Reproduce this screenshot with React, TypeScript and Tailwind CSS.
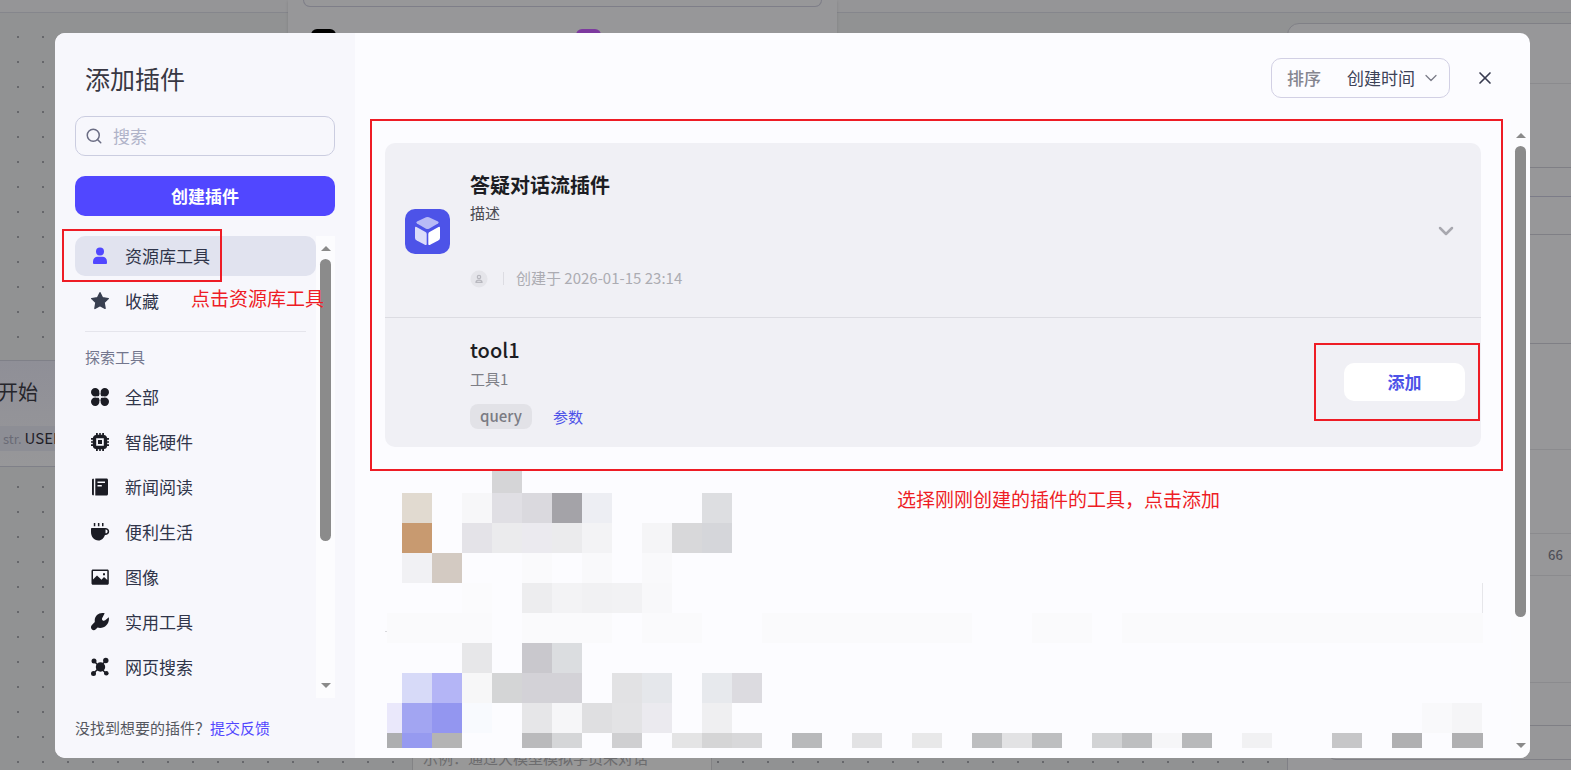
import { ReactNode } from "react";
import { Search, ChevronDown, X } from "lucide-react";

interface Category {
  label: string;
  icon: ReactNode;
}

interface Cell {
  x: number;
  y: number;
  fill: string;
  w?: number;
  h?: number;
}

const iconClass = "h-5 w-5 shrink-0";

const UserIcon = () => (
  <svg viewBox="0 0 20 20" className={iconClass} fill="#5147ff">
    <circle cx="10" cy="5.5" r="4" />
    <path d="M3 15.5C3 12.5 5.2 10.8 7.5 10.8h5c2.3 0 4.5 1.7 4.5 4.7v1.3c0 .8-.5 1.2-1.2 1.2H4.2C3.5 18 3 17.6 3 16.8z" />
  </svg>
);

const StarIcon = () => (
  <svg viewBox="0 0 20 20" className={iconClass} fill="#383f50" stroke="#383f50" strokeWidth="1.4" strokeLinejoin="round">
    <path d="M10 1.7l2.5 5.1 5.8.8-4.2 4 1 5.8-5.1-2.7-5.1 2.7 1-5.8-4.2-4 5.8-.8z" />
  </svg>
);

const categories: Category[] = [
  {
    label: "全部",
    icon: (
      <svg viewBox="0 0 20 20" className={iconClass} fill="#1b1c24">
        <path d="M5.2 1a4.2 4.2 0 1 1 0 8.4A4.2 4.2 0 0 1 5.2 1zM14.8 1a4.2 4.2 0 1 1 0 8.4 4.2 4.2 0 0 1 0-8.4zM5.2 10.6a4.2 4.2 0 1 1 0 8.4 4.2 4.2 0 0 1 0-8.4zM14.8 10.6a4.2 4.2 0 1 1 0 8.4 4.2 4.2 0 0 1 0-8.4z" />
        <path d="M6 6h3.4v1.5A2 2 0 0 1 7.5 9.4zM14 6h-3.4v1.5a2 2 0 0 0 1.9 1.9zM6 14h3.4v-1.5a2 2 0 0 0-1.9-1.9zM14 14h-3.4v-1.5a2 2 0 0 1 1.9-1.9z" />
      </svg>
    ),
  },
  {
    label: "智能硬件",
    icon: (
      <svg viewBox="0 0 20 20" className={iconClass} fill="#1b1c24">
        <path
          fillRule="evenodd"
          d="M6 1h1.8v1.8h1.4V1h1.6v1.8h1.4V1H14v1.9c1.7.1 3 1.4 3.1 3.1H19v1.8h-1.8v1.4H19v1.6h-1.8v1.4H19V14h-1.9c-.1 1.7-1.4 3-3.1 3.1V19h-1.8v-1.8h-1.4V19H9.2v-1.8H7.8V19H6v-1.9C4.3 17 3 15.7 2.9 14H1v-1.8h1.8v-1.4H1V9.2h1.8V7.8H1V6h1.9C3 4.3 4.3 3 6 2.900zM6.200 6.200v7.600h7.600V6.200z"
        />
        <path d="M8 8h4v4H8z" />
      </svg>
    ),
  },
  {
    label: "新闻阅读",
    icon: (
      <svg viewBox="0 0 20 20" className={iconClass} fill="#1b1c24">
        <path d="M2 3c0-.8.5-1.3 1.2-1.3h.7v16.6h-.7C2.5 18.3 2 17.8 2 17z" />
        <path fillRule="evenodd" d="M5.3 1.5h11.2c.9 0 1.5.6 1.5 1.5v14c0 .9-.6 1.5-1.5 1.5H5.3zM7.5 4.5V6H15V4.5zM7.5 8v1.5h4.3V8z" />
      </svg>
    ),
  },
  {
    label: "便利生活",
    icon: (
      <svg viewBox="0 0 20 20" className={iconClass} fill="#1b1c24">
        <path d="M3.8 1h1.5v3.2H3.8zM7.9 1h1.5v3.2H7.9zM12 1h1.5v3.2H12z" />
        <path
          fillRule="evenodd"
          d="M2 6h13.5c2 0 3.7 1.5 3.7 3.5s-1.7 3.5-3.9 3.5h-.3c-1.2 3-3.3 5.5-6.5 5.5C4 18.5 1 14.5 1 10V7c0-.6.4-1 1-1zM15.5 7.5v3.8h.2c1 0 1.9-.8 1.9-1.9s-.8-1.900-1.800-1.900z"
        />
      </svg>
    ),
  },
  {
    label: "图像",
    icon: (
      <svg viewBox="0 0 20 20" className={iconClass} fill="#1b1c24">
        <path
          fillRule="evenodd"
          d="M3 2.5h14.3c.9 0 1.5.6 1.5 1.5v12.3c0 .9-.6 1.5-1.5 1.5H3c-.9 0-1.5-.6-1.5-1.5V4c0-.9.6-1.5 1.5-1.5zM3 4v8.400l4-4 4.500 4.300L14 10l3.300 3V4zM13 6.200h2v2h-2z"
        />
      </svg>
    ),
  },
  {
    label: "实用工具",
    icon: (
      <svg viewBox="0 0 20 20" className={iconClass} fill="#1b1c24">
        <path d="M14.7 1.3C9.500-.3 4 3.500 4.800 9.900L1.700 13.300c-1 1-1 2.800 0 3.900 1.300 1.400 3 1.200 4.100.1l1.800-1.700c6.800 1.600 12.300-3.700 11.200-10.300l-3.600 3c-.9.7-2.100.6-2.700-.1-.7-.8-.7-1.800 0-2.600z" />
      </svg>
    ),
  },
  {
    label: "网页搜索",
    icon: (
      <svg viewBox="0 0 20 20" className={iconClass} fill="#1b1c24" stroke="#1b1c24">
        <path d="M4 4l12 12.5M16 3.5L3.5 16.5" strokeWidth="1.4" />
        <g stroke="none">
          <circle cx="10.5" cy="10" r="4.7" />
          <circle cx="4" cy="4" r="2.5" />
          <circle cx="15.8" cy="3.5" r="2.7" />
          <circle cx="3.5" cy="16.5" r="2.5" />
          <circle cx="16.3" cy="16.3" r="2.3" />
        </g>
      </svg>
    ),
  },
];

// Censored list entries, in 30px blocks measured from the list's left edge
const cells: Cell[] = [
  { x: 107, y: 0, h: 22, fill: "#d5d5d7" },
  { x: 17, y: 22, fill: "#e1dad0" },
  { x: 77, y: 22, fill: "#f7f7f9" },
  { x: 107, y: 22, fill: "#e0dfe4" },
  { x: 137, y: 22, fill: "#dad9de" },
  { x: 167, y: 22, fill: "#a4a3a8" },
  { x: 197, y: 22, fill: "#edeef3" },
  { x: 317, y: 22, fill: "#dddee1" },
  { x: 17, y: 52, fill: "#c89a70" },
  { x: 77, y: 52, fill: "#e4e3e8" },
  { x: 107, y: 52, fill: "#ebebed" },
  { x: 137, y: 52, fill: "#ebeaef" },
  { x: 167, y: 52, fill: "#ebebed" },
  { x: 197, y: 52, fill: "#f3f3f5" },
  { x: 257, y: 52, fill: "#f5f5f7" },
  { x: 287, y: 52, fill: "#d8d8da" },
  { x: 317, y: 52, fill: "#d5d6da" },
  { x: 17, y: 82, fill: "#f1f1f4" },
  { x: 47, y: 82, fill: "#d3cac2" },
  { x: 137, y: 82, fill: "#fafafc" },
  { x: 197, y: 82, fill: "#f9f9fb" },
  { x: 257, y: 82, fill: "#f9f9fb" },
  { x: 77, y: 112, fill: "#fbfbfd" },
  { x: 137, y: 112, fill: "#ededef" },
  { x: 167, y: 112, fill: "#f3f3f5" },
  { x: 197, y: 112, fill: "#f1f1f3" },
  { x: 227, y: 112, fill: "#f2f2f4" },
  { x: 257, y: 112, fill: "#f8f8fa" },
  { x: 1097, y: 112, w: 1, fill: "#e6e6ea" },
  { x: 0, y: 160, w: 2, h: 1, fill: "#d8d8dc" },
  { x: 2, y: 142, w: 105, fill: "#fafafc" },
  { x: 137, y: 142, w: 90, fill: "#fafafc" },
  { x: 257, y: 142, w: 60, fill: "#fafafc" },
  { x: 377, y: 142, w: 210, fill: "#fafafc" },
  { x: 647, y: 142, w: 60, fill: "#fafafc" },
  { x: 737, y: 142, w: 361, fill: "#fafafc" },
  { x: 77, y: 172, fill: "#e7e7e9" },
  { x: 137, y: 172, fill: "#c9c8cd" },
  { x: 167, y: 172, fill: "#dbdde0" },
  { x: 17, y: 202, fill: "#d7daf8" },
  { x: 47, y: 202, fill: "#b4b5f6" },
  { x: 77, y: 202, fill: "#f7f7f8" },
  { x: 107, y: 202, fill: "#d4d5d6" },
  { x: 137, y: 202, w: 60, fill: "#d3d2d7" },
  { x: 227, y: 202, fill: "#e2e2e4" },
  { x: 257, y: 202, fill: "#e5e7eb" },
  { x: 317, y: 202, fill: "#e7e9ed" },
  { x: 347, y: 202, fill: "#dcdbe0" },
  { x: 2, y: 232, w: 15, fill: "#eae8fb" },
  { x: 17, y: 232, fill: "#a2a5f2" },
  { x: 47, y: 232, fill: "#9396f0" },
  { x: 77, y: 232, fill: "#f8fafe" },
  { x: 137, y: 232, fill: "#e6e6e8" },
  { x: 167, y: 232, fill: "#f6f6f8" },
  { x: 197, y: 232, fill: "#dfdfe1" },
  { x: 227, y: 232, fill: "#e3e3e5" },
  { x: 257, y: 232, fill: "#ebeaef" },
  { x: 317, y: 232, fill: "#efeff1" },
  { x: 1037, y: 232, fill: "#f9f9fb" },
  { x: 1067, y: 232, fill: "#f5f5f7" },
  { x: 2, y: 262, w: 15, h: 15, fill: "#adaeb0" },
  { x: 17, y: 262, h: 15, fill: "#969af0" },
  { x: 47, y: 262, h: 15, fill: "#b4b4b4" },
  { x: 137, y: 262, h: 15, fill: "#bababc" },
  { x: 167, y: 262, h: 15, fill: "#d5d6d8" },
  { x: 227, y: 262, h: 15, fill: "#cfcfd1" },
  { x: 287, y: 262, h: 15, fill: "#e4e4e5" },
  { x: 317, y: 262, h: 15, fill: "#d5d5d6" },
  { x: 347, y: 262, h: 15, fill: "#d8d8da" },
  { x: 407, y: 262, h: 15, fill: "#b8b9bb" },
  { x: 467, y: 262, h: 15, fill: "#e2e2e4" },
  { x: 527, y: 262, h: 15, fill: "#e8e8e9" },
  { x: 587, y: 262, h: 15, fill: "#bdbec0" },
  { x: 617, y: 262, h: 15, fill: "#e2e2e4" },
  { x: 647, y: 262, h: 15, fill: "#bdbec0" },
  { x: 707, y: 262, h: 15, fill: "#d2d3d5" },
  { x: 737, y: 262, h: 15, fill: "#bdbec0" },
  { x: 767, y: 262, h: 15, fill: "#f6f6f8" },
  { x: 797, y: 262, h: 15, fill: "#b8b9bb" },
  { x: 857, y: 262, h: 15, fill: "#f1f1f3" },
  { x: 947, y: 262, h: 15, fill: "#c6c6c8" },
  { x: 1007, y: 262, h: 15, fill: "#b0b0b2" },
  { x: 1067, y: 262, w: 31, h: 15, fill: "#b0b0b2" },
];

function Arrow({ up = false }: { up?: boolean }) {
  return (
    <svg viewBox="0 0 10 5" className="h-[5px] w-[10px] shrink-0" fill="#8a8a8a">
      {up ? <path d="M0 5L5 0l5 5z" /> : <path d="M0 0h10L5 5z" />}
    </svg>
  );
}

function Scrollbar({ thumb, className }: { thumb: string; className: string }) {
  return (
    <div className={`flex w-[19px] shrink-0 flex-col items-center bg-[#fcfcfe] ${className}`}>
      <Arrow up />
      <div className={`mt-2 w-[11px] rounded-full bg-[#8b8b8b] ${thumb}`} />
      <div className="flex-1" />
      <Arrow />
    </div>
  );
}

// Workflow editor that stays dimmed behind the dialog
function EditorBackdrop() {
  return (
    <div
      aria-hidden="true"
      className="absolute inset-0 overflow-hidden bg-[#919293] bg-[radial-gradient(circle_at_18px_12px,#66676b_1px,transparent_1px)] bg-[size:25px_25px]"
    >
      <div className="absolute inset-x-0 top-0 h-[13px] border-b border-[#85868c] bg-[#959597]" />
      <div className="absolute top-0 left-[288px] h-10 w-[549px] bg-[#979799] shadow-sm">
        <div className="mx-[15px] h-[7px] rounded-b-xl border border-t-0 border-[#7e7e88]" />
        <div className="absolute top-[29px] left-[23px] h-6 w-[25px] rounded-md bg-black" />
        <div className="absolute top-[29px] left-[288px] h-6 w-[25px] rounded-md bg-[#7d3a9f]" />
      </div>

      <div className="absolute top-[360px] left-0 h-[107px] w-16 border-y border-[#7f8088] bg-linear-to-b from-[#8f8f97] to-[#979799]">
        <div className="absolute top-[17px] left-[-2px] text-xl leading-7 whitespace-nowrap text-[#26262c]">开始</div>
        <div className="absolute top-[65px] left-0 flex h-[25px] w-16 items-center gap-[3px] bg-[#8d8e95] pl-[3px] whitespace-nowrap">
          <span className="text-[13px] text-[#6a6b75]">str.</span>
          <span className="text-[15px] text-[#1f2028]">USER_INPUT</span>
        </div>
      </div>

      <div className="absolute bottom-0 left-[412px] h-5 w-[300px] border-x border-[#838385] bg-[#989898] pl-[10px] text-[15px] leading-4 whitespace-nowrap text-[#6c6c6e]">
        示例：通过大模型模拟学员来对话
      </div>

      <div className="absolute top-[23px] right-[-20px] bottom-[-20px] left-[1287px] rounded-xl border border-[#808086] bg-[#979799]">
        <div className="h-[60px] border-b border-[#8b8b8e]" />
        <div className="h-[84px] border-b border-[#7f7f85]" />
        <div className="h-[29px] border-b border-[#7c7c88]" />
        <div className="h-[38px] border-b border-[#7f7f85]" />
        <div className="h-[109px] border-b border-[#7f7f85]" />
        <div className="h-[106px] border-b border-[#8b8b8e]" />
        <div className="h-[84px] border-b border-[#8b8b8e]" />
        <div className="flex h-[42px] items-center border-b border-[#8b8b8e] pl-[260px] text-[13px] font-medium text-[#505058]">66</div>
        <div className="h-[107px] border-b border-[#8b8b8e]" />
        <div className="h-[43px] border-b border-[#7f7f85]" />
        <div className="ml-10 h-[34px] rounded-b-lg border-b border-[#7f7f85]" />
      </div>
    </div>
  );
}

function Sidebar() {
  return (
    <aside className="flex w-[300px] shrink-0 flex-col bg-[#f7f7fc] px-5 pt-[27px] pb-[18px]">
      <h1 id="dialog-title" className="px-[10px] text-[25px] leading-9 text-[#383743]">
        添加插件
      </h1>

      <label className="mt-5 flex h-10 shrink-0 items-center gap-[10px] rounded-[10px] border border-[#cbcde0] px-[9px]">
        <Search className="h-[18px] w-[18px] shrink-0 text-[#6b6d84]" strokeWidth={2} />
        <input
          type="text"
          aria-label="搜索"
          placeholder="搜索"
          className="w-full min-w-0 bg-transparent text-[17px] outline-none placeholder:text-[#b0b3c9]"
        />
      </label>

      <button type="button" className="mt-5 h-10 shrink-0 rounded-[10px] bg-[#5147ff] text-[17px] font-bold text-white">
        创建插件
      </button>

      <div className="relative mt-5 flex min-h-0 flex-1">
        <nav className="flex min-w-0 flex-1 flex-col gap-[5px] overflow-hidden text-[17px] text-[#30354a]">
          <button type="button" className="flex h-10 shrink-0 items-center gap-[15px] rounded-[10px] bg-[#e1e3ef] px-[15px]">
            <UserIcon />
            资源库工具
          </button>
          <button type="button" className="flex h-10 shrink-0 items-center gap-[15px] px-[15px]">
            <StarIcon />
            收藏
          </button>
          <hr className="mx-[10px] mt-[5px] border-[#e5e5ec]" />
          <h2 className="mt-[10px] mb-[5px] px-[10px] text-[15px] leading-5 font-normal text-[#73768d]">探索工具</h2>
          {categories.map((item) => (
            <button key={item.label} type="button" className="flex h-10 shrink-0 items-center gap-[15px] px-[15px]">
              {item.icon}
              {item.label}
            </button>
          ))}
        </nav>
        <Scrollbar className="py-[10px]" thumb="h-[282px]" />

        <div className="pointer-events-none absolute -top-[7px] -left-[13px] h-[53px] w-[160px] border-2 border-[#ee1c25]" />
        <p className="pointer-events-none absolute top-12 left-[116px] text-[19px] leading-7 whitespace-nowrap text-[#ee1c25]">
          点击资源库工具
        </p>
      </div>

      <p className="mt-[18px] text-[15px] leading-6 text-[#55575f]">
        没找到想要的插件？
        <a href="#feedback" className="text-[#5147ff]">
          提交反馈
        </a>
      </p>
    </aside>
  );
}

function PluginCard() {
  return (
    <div className="relative">
      <article className="rounded-[10px] bg-[#f0f0f5]">
        <div className="flex items-center gap-5 border-b border-[#dcdce2] px-5 pt-[25px] pb-[23px]">
          <svg viewBox="0 0 45 45" className="h-[45px] w-[45px] shrink-0">
            <rect width="45" height="45" rx="10" fill="#4d53e8" />
            <path d="M21 8.3q1.5-.7 3 0l9 4.3q1.5.9 0 1.9l-9 5.2q-1.5.8-3 0l-9-5.2q-1.5-1 0-1.9z" fill="#b8baf6" />
            <path d="M10 19q0-1.7 1.5-.9l9 5q1.2.7 1.2 2v10q0 1.5-1.4.8l-8.5-4.4Q10 30.5 10 29z" fill="#dbdcfa" />
            <path d="M35 19q0-1.7-1.5-.9l-9 5q-1.2.7-1.2 2v10q0 1.5 1.4.8l8.5-4.4Q35 30.5 35 29z" fill="#fff" />
          </svg>
          <div className="min-w-0 flex-1">
            <h3 className="text-xl leading-[34px] font-bold text-[#1c1d23]">答疑对话流插件</h3>
            <p className="h-[57px] text-[15px] leading-[22px] text-[#4a4b53]">描述</p>
            <div className="mt-1 flex h-[31px] items-center text-[15px] text-[#acacb2]">
              <svg viewBox="0 0 18 18" className="h-[18px] w-[18px]">
                <circle cx="9" cy="9" r="8.5" fill="#e5e5ea" />
                <g fill="none" stroke="#b8b8bf" strokeWidth="1.2">
                  <circle cx="9" cy="7" r="1.7" />
                  <path d="M6 12.3c0-3 6-3 6 0z" />
                </g>
              </svg>
              <span className="mr-3 ml-[15px] h-[13px] w-px bg-[#dcdce2]" />
              创建于 2026-01-15 23:14
            </div>
          </div>
          <button type="button" aria-label="展开" className="mr-[3px] text-[#a8a8af]">
            <ChevronDown className="h-6 w-6" strokeWidth={2.5} />
          </button>
        </div>

        <div className="flex items-center pt-4 pr-4 pb-[18px] pl-[85px]">
          <div className="min-w-0 flex-1">
            <h3 className="text-xl leading-8 font-medium text-[#1c1d23]">tool1</h3>
            <p className="text-[15px] leading-[26px] text-[#7d7e86]">工具1</p>
            <div className="mt-3 flex items-center gap-[21px] text-[15px]">
              <span className="flex h-[25px] items-center rounded-lg bg-[#e2e2e7] px-[10px] font-medium text-[#7a7b83]">query</span>
              <a href="#params" className="leading-[25px] text-[#4d53e8]">
                参数
              </a>
            </div>
          </div>
          <div className="relative">
            <button type="button" className="h-[38px] w-[121px] rounded-[10px] bg-white text-[17px] font-bold text-[#4d53e8]">
              添加
            </button>
            <div className="pointer-events-none absolute -top-5 -right-[15px] -bottom-5 -left-[30px] border-2 border-[#ee1c25]" />
          </div>
        </div>
      </article>
      <div className="pointer-events-none absolute -top-6 -right-[22px] -bottom-6 -left-[15px] border-2 border-[#ee1c25]" />
    </div>
  );
}

export default function App() {
  return (
    <div className='relative flex h-screen overflow-hidden pt-[33px] pr-[41px] pb-3 pl-[55px] font-["Noto_Sans_CJK_SC","Noto_Sans",sans-serif]'>
      <EditorBackdrop />
      <div role="dialog" aria-labelledby="dialog-title" className="relative flex min-w-0 flex-1 overflow-hidden rounded-[10px] bg-[#fcfcff]">
        <Sidebar />
        <main className="flex min-w-0 flex-1 flex-col">
          <header className="flex items-center justify-end gap-[25px] pt-[25px] pr-[35px]">
            <div className="flex h-10 items-center rounded-[10px] border border-[#d2d0e4] pl-[15px] text-[17px]">
              <label htmlFor="sort" className="font-medium text-[#85858f]">
                排序
              </label>
              <div className="relative ml-[26px] flex items-center">
                <select id="sort" defaultValue="created" className="w-[102px] appearance-none bg-transparent text-[#3d4257] outline-none">
                  <option value="created">创建时间</option>
                </select>
                <ChevronDown className="pointer-events-none absolute right-2 h-5 w-5 text-[#7a7b88]" strokeWidth={1.5} />
              </div>
            </div>
            <button type="button" aria-label="关闭" className="text-[#383b50]">
              <X className="h-5 w-5" strokeWidth={2} />
            </button>
          </header>

          <div className="mt-[22px] flex min-h-0 flex-1">
            <section className="min-w-0 flex-1 px-[30px] pt-[23px]">
              <PluginCard />
              <div className="relative mt-6 -mr-[2px]">
                <svg viewBox="0 0 1098 277" className="w-full" shapeRendering="crispEdges" aria-hidden="true">
                  {cells.map((cell) => (
                    <rect key={`${cell.x}-${cell.y}`} x={cell.x} y={cell.y} width={cell.w ?? 30} height={cell.h ?? 30} fill={cell.fill} />
                  ))}
                </svg>
                <p className="pointer-events-none absolute top-[14px] left-[512px] text-[19px] leading-7 whitespace-nowrap text-[#ee1c25]">
                  选择刚刚创建的插件的工具，点击添加
                </p>
              </div>
            </section>
            <Scrollbar className="pt-[13px] pb-[10px]" thumb="h-[471px]" />
          </div>
        </main>
      </div>
    </div>
  );
}
